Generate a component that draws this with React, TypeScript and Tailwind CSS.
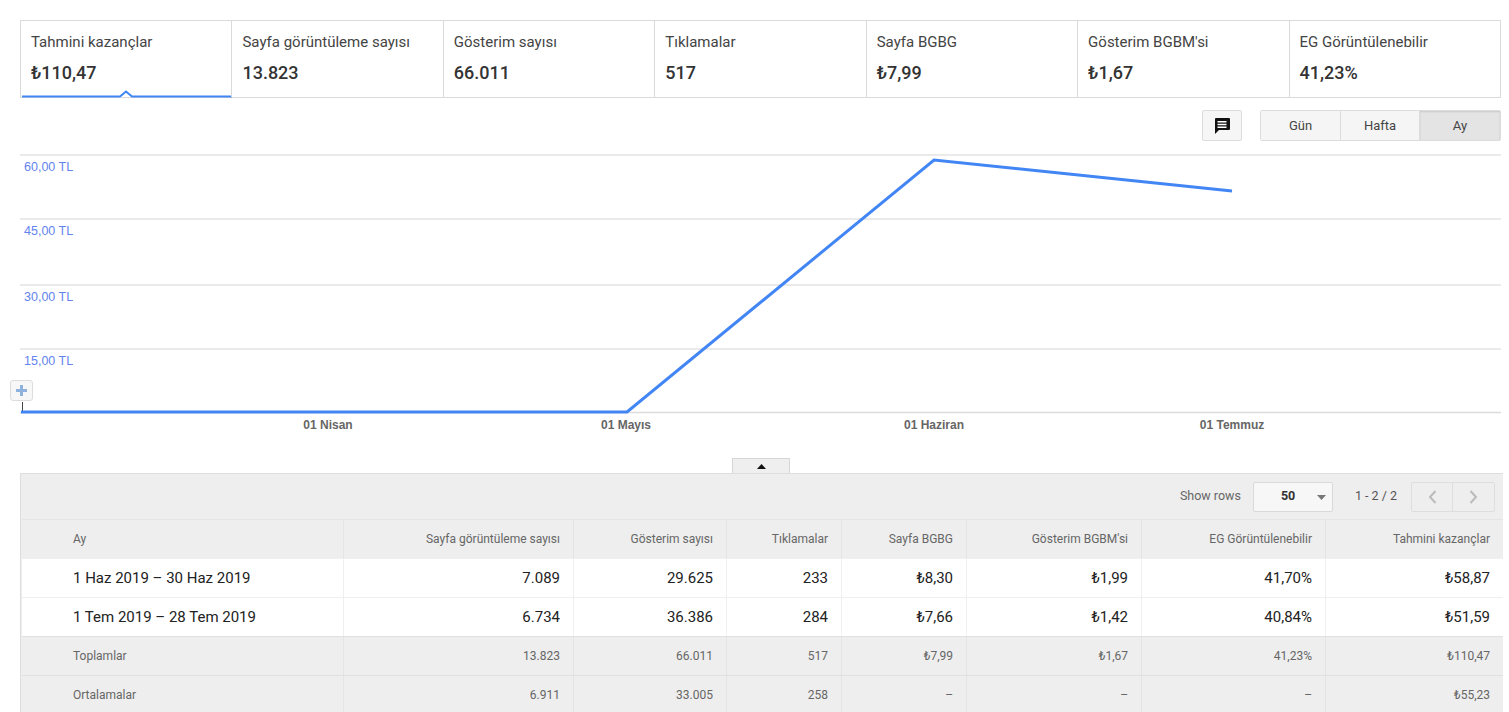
import React from "react";

const tabs = [
  { label: "Tahmini kazançlar", value: "₺110,47" },
  { label: "Sayfa görüntüleme sayısı", value: "13.823" },
  { label: "Gösterim sayısı", value: "66.011" },
  { label: "Tıklamalar", value: "517" },
  { label: "Sayfa BGBG", value: "₺7,99" },
  { label: "Gösterim BGBM'si", value: "₺1,67" },
  { label: "EG Görüntülenebilir", value: "41,23%" },
];

const cols = [
  { title: "Ay", w: "w-[321px]" },
  { title: "Sayfa görüntüleme sayısı", w: "w-[230px]" },
  { title: "Gösterim sayısı", w: "w-[153px]" },
  { title: "Tıklamalar", w: "w-[115px]" },
  { title: "Sayfa BGBG", w: "w-[125px]" },
  { title: "Gösterim BGBM'si", w: "w-[175px]" },
  { title: "EG Görüntülenebilir", w: "w-[184px]" },
  { title: "Tahmini kazançlar", w: "w-[178px]" },
];

const rows = [
  ["1 Haz 2019 – 30 Haz 2019", "7.089", "29.625", "233", "₺8,30", "₺1,99", "41,70%", "₺58,87"],
  ["1 Tem 2019 – 28 Tem 2019", "6.734", "36.386", "284", "₺7,66", "₺1,42", "40,84%", "₺51,59"],
];

const summary = [
  ["Toplamlar", "13.823", "66.011", "517", "₺7,99", "₺1,67", "41,23%", "₺110,47"],
  ["Ortalamalar", "6.911", "33.005", "258", "–", "–", "–", "₺55,23"],
];

function Chart() {
  const grid = [
    { y: 155, label: "60,00 TL" },
    { y: 219, label: "45,00 TL" },
    { y: 285, label: "30,00 TL" },
    { y: 349, label: "15,00 TL" },
  ];
  const months = [
    { x: 328, label: "01 Nisan" },
    { x: 626, label: "01 Mayıs" },
    { x: 934, label: "01 Haziran" },
    { x: 1232, label: "01 Temmuz" },
  ];
  // viewBox starts at the page y of this block (141) so coordinates read as page pixels
  return (
    <div className="relative h-[300px]">
      <svg width="1509" height="300" viewBox="0 141 1509 300" className="block">
        {grid.map((g) => (
          <g key={g.y}>
            <line x1="20" x2="1501" y1={g.y} y2={g.y} stroke="#e3e3e3" strokeWidth="1.5" />
            <text
              x="24"
              y={g.y + 15.5}
              fontFamily="'Liberation Sans', Arial, sans-serif"
              fontSize="12.5"
              fill="#6383ee"
            >
              {g.label}
            </text>
          </g>
        ))}
        <line x1="20" x2="1501" y1="412.5" y2="412.5" stroke="#dcdcdc" strokeWidth="1.5" />
        <line x1="22.5" x2="22.5" y1="402" y2="412" stroke="#444" strokeWidth="1" />
        <polyline
          points="21,412 627,412 934,160 1232,191"
          fill="none"
          stroke="#4285f4"
          strokeWidth="3"
          strokeLinejoin="miter"
        />
        {months.map((m) => (
          <text
            key={m.label}
            x={m.x}
            y="428.5"
            textAnchor="middle"
            fontFamily="'Liberation Sans', Arial, sans-serif"
            fontSize="12"
            fontWeight="bold"
            fill="#666"
          >
            {m.label}
          </text>
        ))}
      </svg>
      <button className="absolute left-[10px] top-[239px] w-[23px] h-[21px] rounded-[3px] border border-[#ddd] bg-[#f7f7f7] flex items-center justify-center">
        <svg width="11" height="11" viewBox="0 0 11 11">
          <path d="M4 0h3v4h4v3H7v4H4V7H0V4h4z" fill="#8fb1dd" />
        </svg>
      </button>
    </div>
  );
}

export default function App() {
  return (
    <div className="w-[1509px] h-[712px] overflow-hidden bg-white font-['Roboto',sans-serif] text-[#333]">
      <div className="pt-5 pl-5 pr-2">
        {/* metric tabs */}
        <div className="flex h-[78px] border border-[#dadada]">
          {tabs.map((t, i) => (
            <div
              key={t.label}
              className={
                "relative flex-1 pl-[10px] pt-[11px] " + (i > 0 ? "border-l border-[#dadada]" : "")
              }
            >
              <div className="text-[15px] leading-[20px] text-[#444]">{t.label}</div>
              <div className="mt-[10px] text-[18px] leading-[22px] font-medium text-[#333]">{t.value}</div>
              {i === 0 && (
                <div className="absolute left-0 right-0 bottom-[-1px] h-[8px]">
                  <svg width="211" height="8" viewBox="0 0 211 8" className="block">
                    <path d="M1 6.5H99L105 1.5L111 6.5H211" fill="none" stroke="#4285f4" strokeWidth="2" />
                  </svg>
                </div>
              )}
            </div>
          ))}
        </div>

        {/* controls */}
        <div className="flex justify-end items-center gap-[18px] mt-3 h-[31px]">
          <button className="w-[40px] h-[31px] rounded-[2px] border border-[#dcdcdc] bg-[#f6f6f6] flex items-center justify-center">
            <svg width="18" height="18" viewBox="0 0 18 18">
              <path d="M2 1h14a1 1 0 0 1 1 1v10a1 1 0 0 1-1 1H6l-4 4V2a1 1 0 0 1 1-1z" fill="#111" />
              <path d="M4.5 4h9v1.5h-9zM4.5 6.8h9v1.5h-9zM4.5 9.6h9v1.5h-9z" fill="#fff" />
            </svg>
          </button>
          <div className="flex h-[31px] border border-[#dcdcdc] rounded-[2px] text-[13px] text-[#444]">
            <button className="w-[80px] bg-[#f5f5f5] border-r border-[#dcdcdc]">Gün</button>
            <button className="w-[79px] bg-[#f5f5f5] border-r border-[#dcdcdc]">Hafta</button>
            <button className="w-[80px] bg-[#e4e4e4] shadow-[inset_0_1px_2px_rgba(0,0,0,0.12)]">Ay</button>
          </div>
        </div>
      </div>

      <Chart />

      {/* collapse handle */}
      <div className="flex justify-start pl-[732px] mt-[17px]">
        <div className="w-[58px] h-[15px] bg-[#efefef] border border-b-0 border-[#d6d6d6] flex items-center justify-center">
          <svg width="9" height="5" viewBox="0 0 9 5">
            <path d="M0 5L4.5 0L9 5z" fill="#111" />
          </svg>
        </div>
      </div>

      {/* table panel */}
      <div className="ml-5 w-[1483px] bg-[#eeeeee] border-l border-t border-[#dedede] pl-px">
        <div className="h-[45px] flex items-center justify-end pr-[8px] text-[12.5px] text-[#666]">
          <span className="mr-3">Show rows</span>
          <div className="relative w-[80px] h-[30px] bg-[#f7f7f7] border border-[#d9d9d9] rounded-[2px] flex items-center">
            <span className="ml-[27px] font-bold text-[#333]">50</span>
            <svg width="9" height="5" viewBox="0 0 9 5" className="absolute right-[6px] top-[12px]">
              <path d="M0 0h9L4.5 5z" fill="#777" />
            </svg>
          </div>
          <span className="ml-[22px] mr-[14px] text-[#555]">1 - 2 / 2</span>
          <div className="flex h-[30px] border border-[#dedede] rounded-[2px]">
            <button className="w-[41px] border-r border-[#dedede] flex items-center justify-center">
              <svg width="9" height="14" viewBox="0 0 9 14">
                <path d="M7.5 1L2 7l5.5 6" fill="none" stroke="#bbb" strokeWidth="2" />
              </svg>
            </button>
            <button className="w-[41px] flex items-center justify-center">
              <svg width="9" height="14" viewBox="0 0 9 14">
                <path d="M1.5 1L7 7l-5.5 6" fill="none" stroke="#bbb" strokeWidth="2" />
              </svg>
            </button>
          </div>
        </div>

        <div className="flex h-[39px] border-t border-[#e4e4e4] text-[12px] text-[#666]">
          {cols.map((c, i) => (
            <div
              key={c.title}
              className={
                c.w +
                " flex items-center " +
                (i === 0 ? "pl-[51px]" : "justify-end pr-[13px] border-l border-[#e4e4e4]")
              }
            >
              {c.title}
            </div>
          ))}
        </div>

        {rows.map((r, ri) => (
          <div key={ri} className="flex h-[39px] bg-white border-t border-[#efefef] text-[15px] text-[#222]">
            {r.map((v, i) => (
              <div
                key={i}
                className={
                  cols[i].w +
                  " flex items-center " +
                  (i === 0 ? "pl-[51px]" : "justify-end pr-[13px] border-l border-[#f0f0f0]")
                }
              >
                {v}
              </div>
            ))}
          </div>
        ))}

        {summary.map((r, ri) => (
          <div key={ri} className="flex h-[39px] border-t border-[#e0e0e0] text-[12px] text-[#666]">
            {r.map((v, i) => (
              <div
                key={i}
                className={
                  cols[i].w +
                  " flex items-center " +
                  (i === 0 ? "pl-[51px]" : "justify-end pr-[13px] border-l border-[#e4e4e4]")
                }
              >
                {v}
              </div>
            ))}
          </div>
        ))}
      </div>
    </div>
  );
}
